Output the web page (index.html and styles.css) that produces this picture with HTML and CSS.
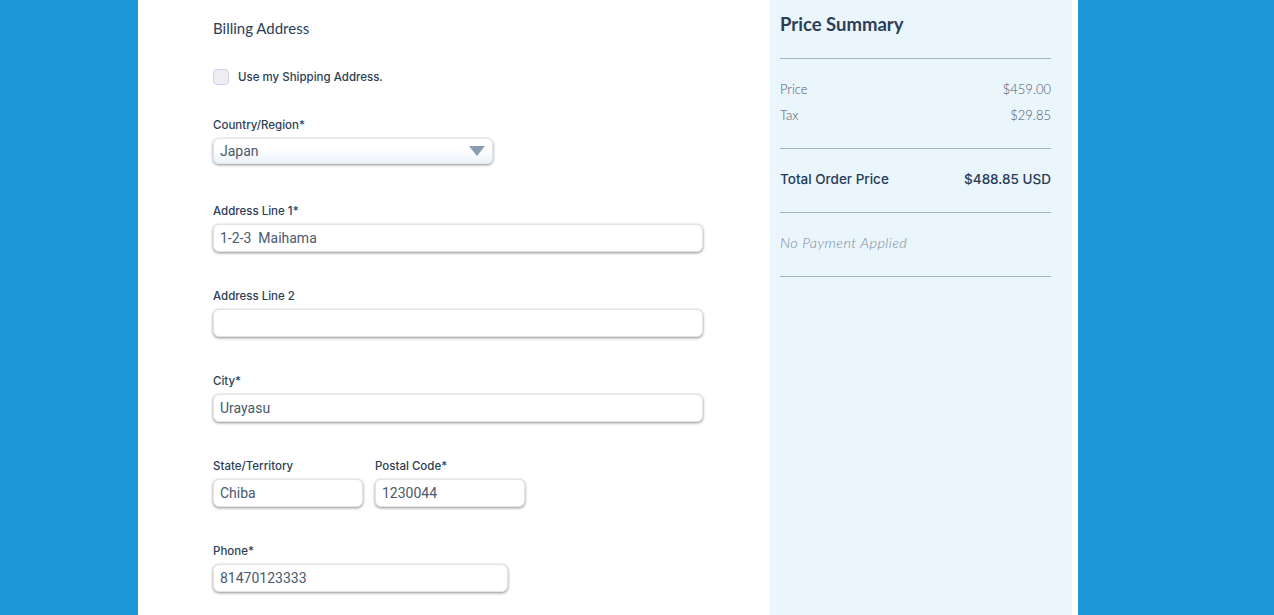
FILE: index.html
```html
<!DOCTYPE html>
<html lang="en">
<head>
    <meta charset="UTF-8">
    <title>Checkout - Billing Address</title>
    <link rel="stylesheet" href="styles.css">
</head>
<body>
    <div class="page">
        <div class="form-col">
            <h2 class="section-title">Billing Address</h2>

            <label class="check-row">
                <span class="checkbox"></span>
                <span>Use my Shipping Address.</span>
            </label>

            <div class="field first">
                <label>Country/Region*</label>
                <div class="select w-280">
                    <span>Japan</span>
                    <svg class="arrow" width="16" height="10" viewBox="0 0 16 10"><polygon points="0,0 16,0 8,10" fill="#8c9cb0"/></svg>
                </div>
            </div>

            <div class="field after-select">
                <label>Address Line 1*</label>
                <div class="input w-490">1-2-3&nbsp; Maihama</div>
            </div>

            <div class="field">
                <label>Address Line 2</label>
                <div class="input w-490"></div>
            </div>

            <div class="field">
                <label>City*</label>
                <div class="input w-490">Urayasu</div>
            </div>

            <div class="field-row">
                <div class="cell">
                    <label>State/Territory</label>
                    <div class="input w-150">Chiba</div>
                </div>
                <div class="cell">
                    <label>Postal Code*</label>
                    <div class="input w-150">1230044</div>
                </div>
            </div>

            <div class="field">
                <label>Phone*</label>
                <div class="input w-295">81470123333</div>
            </div>
        </div>

        <div class="summary">
            <h2 class="summary-title">Price Summary</h2>
            <div class="summary-block items">
                <div class="row"><span>Price</span><span>$459.00</span></div>
                <div class="row"><span>Tax</span><span>$29.85</span></div>
            </div>
            <div class="summary-block total">
                <div class="row"><span>Total Order Price</span><span>$488.85 USD</span></div>
            </div>
            <div class="summary-block note">No Payment Applied</div>
        </div>
    </div>
</body>
</html>
```

FILE: styles.css
```css
body {
    margin: 0;
    padding: 0;
    background-color: #1d96d6;
    font-family: Lato, 'Noto Sans', sans-serif;
    color: #253b56;
    overflow: hidden;
}
.page {
    display: flex;
    margin-left: 138px;
    width: 934px;
    padding-right: 6px;
    background-color: #fff;
    min-height: 615px;
}
.form-col {
    width: 557px;
    padding-left: 75px;
    padding-top: 19px;
}
.section-title {
    margin: 0;
    font-size: 15px;
    font-weight: 400;
    height: 20px;
    color: #2c3e57;
}
.check-row {
    display: flex;
    align-items: center;
    gap: 9px;
    margin-top: 30px;
    font-family: Inter, Lato, sans-serif;
    font-size: 11.5px;
    font-weight: 500;
    color: #2c3e57;
}
.checkbox {
    width: 14px;
    height: 14px;
    border: 1px solid #cfd0ec;
    border-radius: 4px;
    background-color: #eeeef2;
}
label {
    display: block;
    font-family: Inter, Lato, sans-serif;
    font-size: 11.5px;
    font-weight: 500;
    color: #2c3e57;
    height: 15px;
    padding-top: 3px;
    margin-bottom: 5px;
}
.check-row {
    height: auto;
    padding-top: 0;
    margin-bottom: 0;
}
.field {
    margin-top: 34px;
}
.field.first {
    margin-top: 30px;
}
.field.after-select {
    margin-top: 37px;
}
.input, .select {
    box-sizing: border-box;
    height: 28px;
    border: 1px solid #e2e4e8;
    border-radius: 6px;
    box-shadow: 0 1px 3px rgba(0, 0, 0, 0.45);
    background-color: #fff;
    padding: 0 6px;
    font-family: Roboto, 'Noto Sans', sans-serif;
    font-size: 14px;
    color: #4a596c;
    line-height: 27px;
}
.select {
    height: 26px;
    line-height: 25px;
    padding: 0 7px 0 6px;
    display: flex;
    justify-content: space-between;
    align-items: center;
    background: linear-gradient(#ffffff 40%, #eaf3fa);
}
.w-280 { width: 280px; }
.w-490 { width: 490px; }
.w-150 { width: 150px; }
.w-295 { width: 295px; }
.field-row {
    display: flex;
    gap: 12px;
    margin-top: 34px;
}
.cell {
    width: 150px;
}
.summary {
    width: 271px;
    padding: 0 21px 0 10px;
    background-color: #eaf5fc;
}
.summary-title {
    margin: 0;
    padding-top: 13px;
    height: 45px;
    font-size: 18.5px;
    font-weight: 700;
    color: #2c3e57;
    border-bottom: 1px solid #a3b2c4;
}
.summary-block {
    border-bottom: 1px solid #a3b2c4;
}
.summary-block .row {
    display: flex;
    justify-content: space-between;
    font-size: 13px;
    font-weight: 300;
    color: #4a596c;
}
.summary-block.items {
    padding: 21px 0 16px;
}
.summary-block.items .row {
    height: 26px;
    line-height: 18px;
}
.summary-block.total {
    padding: 21px 0 24px;
}
.summary-block.total .row {
    font-family: Inter, Lato, sans-serif;
    font-size: 13.5px;
    font-weight: 500;
    color: #253b56;
    line-height: 18px;
}
.summary-block.note {
    padding: 20px 0 23px;
    font-size: 14.5px;
    font-style: italic;
    font-weight: 300;
    letter-spacing: 0.4px;
    color: #7d8a9a;
    line-height: 20px;
}
```
